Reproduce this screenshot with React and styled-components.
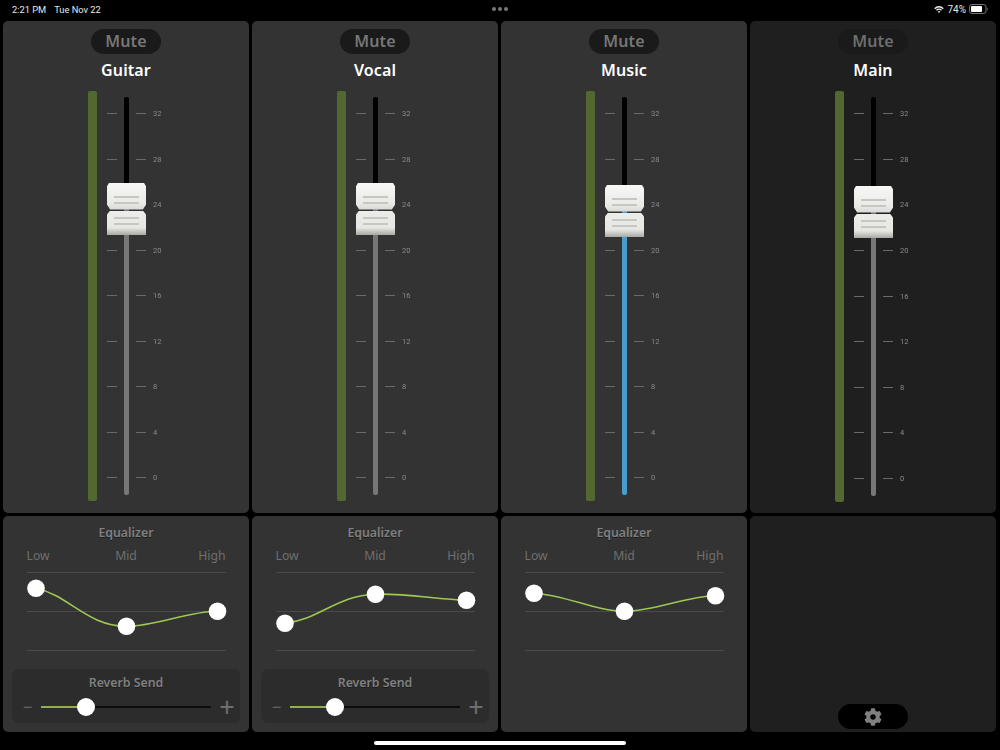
import React from 'react';
import styled, { createGlobalStyle } from 'styled-components';
import { FaCog } from 'react-icons/fa';

const Global = createGlobalStyle`
  html, body { margin: 0; padding: 0; background: #000; }
  body { font-family: "Noto Sans", "Open Sans", sans-serif; }
`;

const Screen = styled.div`
  width: 1000px; height: 750px; background: #000; display: flex; flex-direction: column; overflow: hidden;
`;
const StatusBar = styled.div`
  height: 21px; padding: 0 12px 3px; display: flex; align-items: center; justify-content: space-between;
  position: relative; color: #e8e8e8; font: 400 9.3px Roboto, sans-serif; box-sizing: border-box;
`;
const StatusGroup = styled.div`display: flex; align-items: center; gap: ${p => p.$gap}px;`;
const Battery = styled(StatusGroup)`font-size: 10px;`;
const Dots = styled.div`
  position: absolute; left: 492px; top: 7px; display: flex; gap: 2px;
`;
const Dot = styled.span`width: 4px; height: 4px; border-radius: 50%; background: #777;`;

const Columns = styled.div`
  display: grid; grid-template-columns: repeat(4, 246px); column-gap: 3px; padding: 0 3px;
`;
const Column = styled.div`display: flex; flex-direction: column; gap: 3px;`;
const Panel = styled.div`
  background: ${p => (p.$dim ? '#1f1f1f' : '#333333')}; border-radius: 5px; position: relative;
  display: flex; flex-direction: column; align-items: center; box-sizing: border-box;
`;
const StripPanel = styled(Panel)`height: 492px; padding-top: 8px;`;
const BottomPanel = styled(Panel)`height: 216px; padding-top: 8px;`;

const Mute = styled.div`
  width: 70px; height: 25px; border-radius: 13px; background: #1a1a1a;
  color: ${p => (p.$dim ? '#6e6e6e' : '#777')}; font-size: 16px; font-weight: 600; line-height: 25px;
  letter-spacing: 0.2px; text-align: center;
`;
const Name = styled.div`
  color: #fff; font-size: 16px; font-weight: 600; line-height: 24px; margin-top: 4px; letter-spacing: 0.1px;
`;
const Fader = styled.div`
  align-self: flex-start; margin-left: 85px; margin-top: 9px; display: flex; position: relative;
`;
const Meter = styled.div`
  width: 9px; height: ${p => (p.$tall ? 411 : 410)}px; background: #526830; border-radius: 2px;
`;
const Scale = styled.div`
  position: relative; margin-left: 10px; width: 70px; height: ${p => (p.$tall ? 399 : 398)}px; margin-top: 6px;
  display: flex; flex-direction: column; padding-top: 11px; box-sizing: border-box;
`;
const Track = styled.div`
  position: absolute; left: 17px; top: 0; width: 5px; height: 100%; border-radius: 2px;
  background: linear-gradient(to bottom, #000 0, #000 ${p => p.$split}px, ${p => (p.$blue ? '#4a9ccb' : '#777')} ${p => p.$split}px);
`;
const TickRow = styled.div`
  height: ${p => (p.$tall ? 45.625 : 45.5)}px; display: flex; align-items: flex-start; position: relative; flex: none;
`;
const Tick = styled.span`
  width: 10px; height: 1px; background: #6a6a6a; margin-top: 5px; margin-right: ${p => p.$gap}px;
`;
const TickLabel = styled.span`
  color: #8a8a8a; font: 400 7.5px Roboto, sans-serif; line-height: 11px; will-change: transform;
`;
const Thumb = styled.div`
  position: absolute; left: 0; top: ${p => p.$top}px; width: 39px; height: 52px; z-index: 2;
  display: flex; flex-direction: column; gap: 1px;
`;
const CapUpper = styled.div`
  height: 26.5px; flex: none; display: flex; flex-direction: column; align-items: center; gap: 4px;
  padding-top: 13px; box-sizing: border-box;
  background: linear-gradient(to bottom, #f8f8f6 0, #e9e9e6 75%, #d8d8d5 100%);
  clip-path: polygon(5% 0, 95% 0, 100% 12%, 100% 82%, 92% 100%, 8% 100%, 0 82%, 0 12%);
`;
const CapLower = styled.div`
  flex: 1; display: flex; flex-direction: column; align-items: center; gap: 4px;
  padding-top: 6px; box-sizing: border-box;
  background: linear-gradient(to bottom, #ecece9 0, #e6e6e3 70%, #a8a8a5 100%);
  clip-path: polygon(8% 0, 92% 0, 100% 16%, 100% 100%, 0 100%, 0 16%);
`;
const Grip = styled.span`width: 25px; height: 2px; background: #c6c6c3; flex: none;`;

const SectionTitle = styled.div`
  color: #808080; font-size: 12.3px; font-weight: 600; line-height: 17px; text-shadow: 0 1px 0 #1c1c1c;
`;
const BandLabels = styled.div`
  width: 199px; display: grid; grid-template-columns: 1fr 1fr 1fr; color: #6f6f6f; font-size: 12.2px; line-height: 17px; margin-top: 6px;
`;
const Band = styled.span`text-align: ${p => p.$align};`;
const Chart = styled.svg`display: block; margin-top: 8px; overflow: visible;`;
const ReverbBox = styled.div`
  width: 228px; height: 54px; background: #2c2c2c; border-radius: 7px; margin-top: 17px; box-sizing: border-box; padding-top: 5px;
  display: flex; flex-direction: column; align-items: center;
`;
const SliderRow = styled.div`
  width: 100%; display: flex; align-items: center; margin-top: 4px; box-sizing: border-box; padding: 0 5px 0 10px;
`;
const Sign = styled.span`
  width: ${p => p.$w}px; font-size: ${p => p.$size}px; line-height: 24px; font-weight: 400; text-align: center; flex: none; color: #6f6f6f;
`;
const SliderTrack = styled.div`
  width: 171px; height: 2px; margin: 0 8px; background: #0c0c0c; position: relative;
`;
const SliderFill = styled.div`width: 45px; height: 2px; background: #8fae55;`;
const SliderKnob = styled.div`
  position: absolute; left: 36px; top: -8px; width: 18px; height: 18px; border-radius: 50%; background: #fff;
`;
const Spacer = styled.div`flex: 1;`;
const GearButton = styled.div`
  width: 70px; height: 25px; border-radius: 13px; background: #000; margin-bottom: 3px;
  display: flex; align-items: center; justify-content: center; color: #808080; font-size: 18px;
`;
const HomeRow = styled.div`display: flex; justify-content: center; margin-top: 9px;`;
const HomeBar = styled.div`width: 252px; height: 4px; border-radius: 2px; background: #fff;`;

const SCALE = [32, 28, 24, 20, 16, 12, 8, 4, 0];

function EqChart({ path, nodes }) {
  return (
    <Chart width="199" height="80" viewBox="0 0 199 80">
      {[0.5, 39.5, 78.5].map(y => <line key={y} x1="0" x2="199" y1={y} y2={y} stroke="#4a4a4a" strokeWidth="1" />)}
      <g transform="translate(0,-0.8)">
        <path d={path} fill="none" stroke="#9fc752" strokeWidth="1.6" />
        {nodes.map(([x, y]) => <circle key={x} cx={x} cy={y} r="8.8" fill="#fff" />)}
      </g>
    </Chart>
  );
}

function FaderStrip({ name, thumbTop, tall, blue, dim }) {
  return (
    <StripPanel $dim={dim}>
      <Mute $dim={dim}>Mute</Mute>
      <Name>{name}</Name>
      <Fader>
        <Meter $tall={tall} />
        <Scale $tall={tall}>
          <Track $split={thumbTop + 26} $blue={blue} />
          {SCALE.map(v => (
            <TickRow key={v} $tall={tall}>
              <Tick $gap={19} />
              <Tick $gap={7} />
              <TickLabel>{v}</TickLabel>
            </TickRow>
          ))}
          <Thumb $top={thumbTop}>
            <CapUpper><Grip /><Grip /></CapUpper>
            <CapLower><Grip /><Grip /></CapLower>
          </Thumb>
        </Scale>
      </Fader>
    </StripPanel>
  );
}

function Equalizer({ path, nodes }) {
  return (
    <>
      <SectionTitle>Equalizer</SectionTitle>
      <BandLabels>
        <Band $align="left">Low</Band>
        <Band $align="center">Mid</Band>
        <Band $align="right">High</Band>
      </BandLabels>
      <EqChart path={path} nodes={nodes} />
    </>
  );
}

function Reverb() {
  return (
    <ReverbBox>
      <SectionTitle>Reverb Send</SectionTitle>
      <SliderRow>
        <Sign $w={11} $size={17}>−</Sign>
        <SliderTrack>
          <SliderFill />
          <SliderKnob />
        </SliderTrack>
        <Sign $w={16} $size={27}>+</Sign>
      </SliderRow>
    </ReverbBox>
  );
}

const CHANNELS = [
  { name: 'Guitar', thumbTop: 86, path: 'M9 17 C42 24 60 55 99.5 55 C130 55 160 40 190.5 40', nodes: [[9, 17], [99.5, 55], [190.5, 40]], reverb: true },
  { name: 'Vocal', thumbTop: 86, path: 'M9 52 C45 48 60 24 99.5 23 C130 22 160 28 190.5 29', nodes: [[9, 52], [99.5, 23], [190.5, 29]], reverb: true },
  { name: 'Music', thumbTop: 88, blue: true, path: 'M9 22 C42 24 70 40 99.5 40 C130 40 160 25 190.5 24.5', nodes: [[9, 22], [99.5, 40], [190.5, 24.5]] },
];

export default function App() {
  return (
    <Screen>
      <Global />
      <StatusBar>
        <StatusGroup $gap={8}><span>2:21 PM</span><span>Tue Nov 22</span></StatusGroup>
        <Dots><Dot /><Dot /><Dot /></Dots>
        <Battery $gap={3}>
          <svg width="10" height="9" viewBox="0 0 11 9">
            <path d="M0.3 3 A7.2 7.2 0 0 1 10.7 3 L9.6 4.1 A5.7 5.7 0 0 0 1.4 4.1 Z" fill="#eee" />
            <path d="M2.2 4.9 A4.6 4.6 0 0 1 8.8 4.9 L7.7 6 A3.1 3.1 0 0 0 3.3 6 Z" fill="#eee" />
            <path d="M4.1 6.8 A2 2 0 0 1 6.9 6.8 L5.5 8.4 Z" fill="#eee" />
          </svg>
          <span>74%</span>
          <svg width="19" height="10" viewBox="0 0 19 10">
            <rect x="0.5" y="0.5" width="16.5" height="9" rx="2.5" fill="none" stroke="#777" />
            <rect x="2" y="2" width="11" height="6" rx="1" fill="#fff" />
            <path d="M18 3.4 C19 3.8 19 6.2 18 6.6 Z" fill="#777" />
          </svg>
        </Battery>
      </StatusBar>
      <Columns>
        {CHANNELS.map(c => (
          <Column key={c.name}>
            <FaderStrip name={c.name} thumbTop={c.thumbTop} blue={c.blue} />
            <BottomPanel>
              <Equalizer path={c.path} nodes={c.nodes} />
              {c.reverb && <Reverb />}
            </BottomPanel>
          </Column>
        ))}
        <Column>
          <FaderStrip name="Main" thumbTop={89} tall dim />
          <BottomPanel $dim>
            <Spacer />
            <GearButton><FaCog /></GearButton>
          </BottomPanel>
        </Column>
      </Columns>
      <HomeRow><HomeBar /></HomeRow>
    </Screen>
  );
}
